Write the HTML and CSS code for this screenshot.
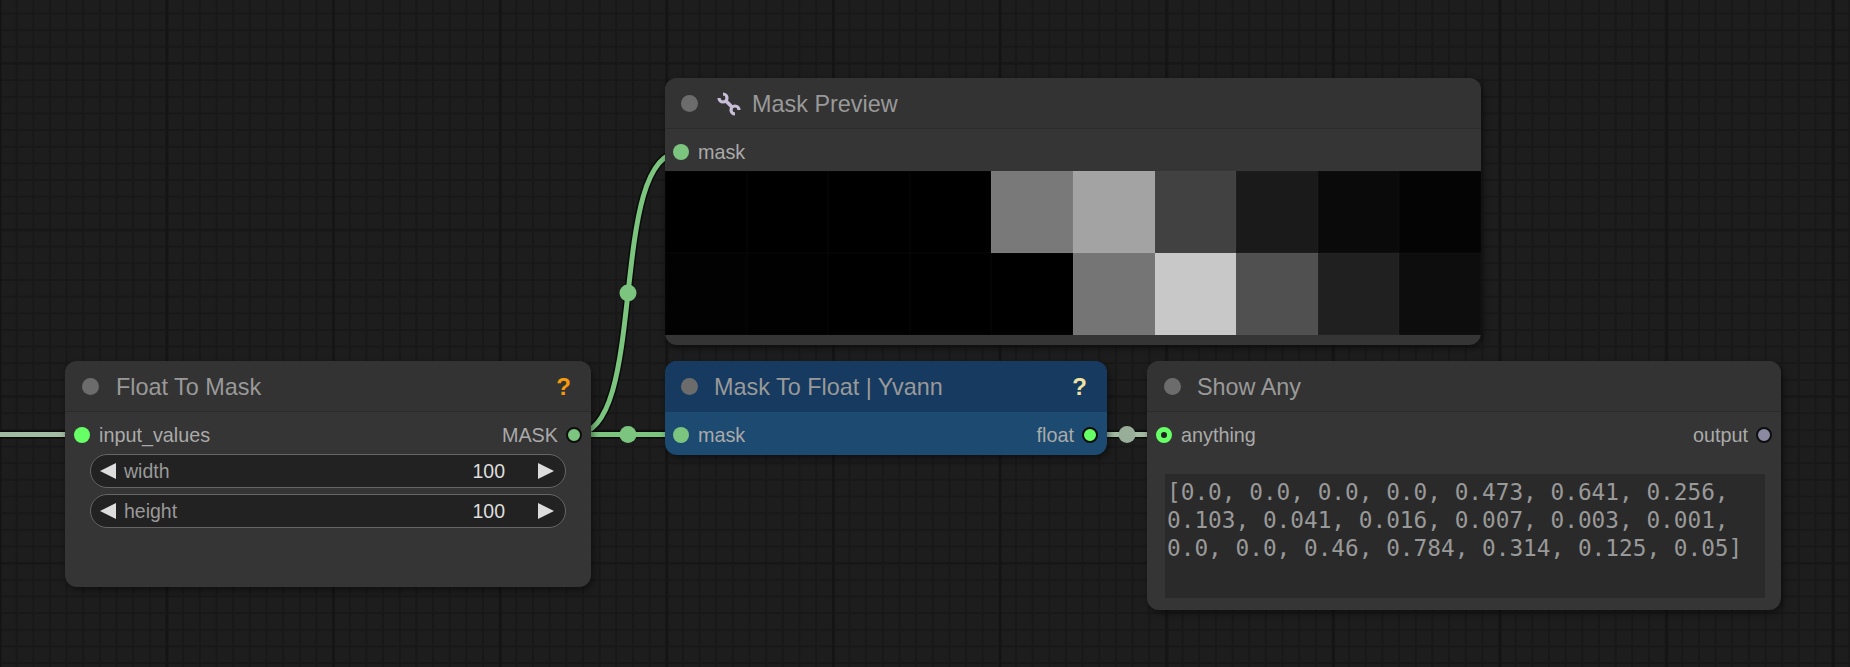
FILE: index.html
```html
<!DOCTYPE html>
<html lang="en">
<head>
    <meta charset="UTF-8">
    <meta name="viewport" content="width=device-width, initial-scale=1.0">
    <title>Node graph</title>
    <link rel="stylesheet" href="styles.css">
</head>
<body>
    <div class="canvas">
        <!-- Links between the nodes, drawn under them -->
        <svg class="links" width="1850" height="667" viewBox="0 0 1850 667">
            <g fill="none" stroke="#0b0b0b" stroke-width="8">
                <path d="M0 434.5H70"/>
                <path d="M575 434.5C650 434.5 606 152 681 152"/>
                <path d="M575 434.5H681"/>
                <path d="M1089 434.5H1165"/>
            </g>
            <g fill="none" stroke-width="5">
                <path stroke="#a3bba3" d="M0 434.5H70"/>
                <path stroke="#7bc57f" d="M575 434.5C650 434.5 606 152 681 152"/>
                <path stroke="#7bc57f" d="M575 434.5H681"/>
                <path stroke="#a3bba3" d="M1089 434.5H1165"/>
            </g>
            <circle cx="628" cy="293" r="8.5" fill="#7bc57f"/>
            <circle cx="628" cy="434.5" r="8.5" fill="#7bc57f"/>
            <circle cx="1127" cy="434.5" r="8.5" fill="#98ae98"/>
        </svg>

        <!-- Mask Preview -->
        <div class="node node-preview">
            <div class="node-title">
                <span class="title-dot"></span>
                <svg class="wrench" width="24" height="24" viewBox="0 0 24 24" fill="none" stroke="#c9bdd9">
                    <path stroke-width="3.2" d="M6 2A4 4 0 1 1 2 6"/>
                    <path stroke-width="3.2" d="M18 22A4 4 0 1 1 22 18"/>
                    <path stroke-width="3.6" d="M8.500 8.500 15.500 15.500"/>
                </svg>
                <span class="title-text">Mask Preview</span>
            </div>
            <div class="slot-row slot-row-short">
                <span class="slot-dot dot-mask"></span>
                <span class="slot-label">mask</span>
            </div>
            <div class="preview-grid">
                <i style="background: rgb(0,0,0)"></i>
                <i style="background: rgb(0,0,0)"></i>
                <i style="background: rgb(0,0,0)"></i>
                <i style="background: rgb(0,0,0)"></i>
                <i style="background: rgb(121,121,121)"></i>
                <i style="background: rgb(163,163,163)"></i>
                <i style="background: rgb(65,65,65)"></i>
                <i style="background: rgb(26,26,26)"></i>
                <i style="background: rgb(10,10,10)"></i>
                <i style="background: rgb(4,4,4)"></i>
                <i style="background: rgb(2,2,2)"></i>
                <i style="background: rgb(1,1,1)"></i>
                <i style="background: rgb(0,0,0)"></i>
                <i style="background: rgb(0,0,0)"></i>
                <i style="background: rgb(0,0,0)"></i>
                <i style="background: rgb(117,117,117)"></i>
                <i style="background: rgb(200,200,200)"></i>
                <i style="background: rgb(80,80,80)"></i>
                <i style="background: rgb(32,32,32)"></i>
                <i style="background: rgb(13,13,13)"></i>
            </div>
        </div>

        <!-- Float To Mask -->
        <div class="node node-float">
            <div class="node-title">
                <span class="title-dot"></span>
                <span class="title-text">Float To Mask</span>
                <span class="help help-orange">?</span>
            </div>
            <div class="slot-row">
                <span class="slot-dot dot-bright"></span>
                <span class="slot-label">input_values</span>
                <span class="slot-label slot-out">MASK</span>
                <span class="slot-dot dot-mask dot-ring"></span>
            </div>
            <div class="widget">
                <span class="arrow arrow-left"></span>
                <span class="widget-name">width</span>
                <span class="widget-value">100</span>
                <span class="arrow arrow-right"></span>
            </div>
            <div class="widget">
                <span class="arrow arrow-left"></span>
                <span class="widget-name">height</span>
                <span class="widget-value">100</span>
                <span class="arrow arrow-right"></span>
            </div>
        </div>

        <!-- Mask To Float -->
        <div class="node node-blue">
            <div class="node-title">
                <span class="title-dot"></span>
                <span class="title-text">Mask To Float | Yvann</span>
                <span class="help help-pale">?</span>
            </div>
            <div class="slot-row">
                <span class="slot-dot dot-mask"></span>
                <span class="slot-label">mask</span>
                <span class="slot-label slot-out">float</span>
                <span class="slot-dot dot-bright dot-ring"></span>
            </div>
        </div>

        <!-- Show Any -->
        <div class="node node-show">
            <div class="node-title">
                <span class="title-dot"></span>
                <span class="title-text">Show Any</span>
            </div>
            <div class="slot-row">
                <span class="slot-dot dot-bright dot-hole"></span>
                <span class="slot-label">anything</span>
                <span class="slot-label slot-out">output</span>
                <span class="slot-dot dot-any dot-ring"></span>
            </div>
            <div class="show-text">[0.0, 0.0, 0.0, 0.0, 0.473, 0.641, 0.256,
0.103, 0.041, 0.016, 0.007, 0.003, 0.001,
0.0, 0.0, 0.46, 0.784, 0.314, 0.125, 0.05]</div>
        </div>
    </div>
</body>
</html>
```

FILE: styles.css
```css
body {
    margin: 0;
    background: #1d1d1d;
    font-family: "Liberation Sans", Arial, sans-serif;
}
.canvas {
    position: relative;
    width: 1850px;
    height: 667px;
    overflow: hidden;
    background-color: #1d1d1d;
    background-image:
        linear-gradient(90deg, #141414 0, #141414 2px, transparent 3px),
        linear-gradient(#171717 0, #171717 2px, transparent 3px),
        linear-gradient(90deg, #181818 0, #181818 2px, transparent 2px),
        linear-gradient(#181818 0, #181818 2px, transparent 2px);
    background-size: 166.67px 166.67px, 166.67px 166.67px, 16.667px 16.667px, 16.667px 16.667px;
    background-position: -1px 0, 0 62px, -1px 0, 0 12.5px;
}
.links {
    position: absolute;
    left: 0;
    top: 0;
}
.node {
    position: absolute;
    box-sizing: border-box;
    background: #353535;
    border-radius: 12px;
    box-shadow: 2px 3px 7px rgba(0, 0, 0, 0.45);
    overflow: hidden;
}
.node-preview {
    left: 665px;
    top: 78px;
    width: 816px;
    height: 267px;
}
.node-float {
    left: 65px;
    top: 361px;
    width: 526px;
    height: 226px;
}
.node-blue {
    left: 665px;
    top: 361px;
    width: 442px;
    height: 94px;
    background: #1c4a70;
}
.node-show {
    left: 1147px;
    top: 361px;
    width: 634px;
    height: 249px;
}
.node-title {
    display: flex;
    align-items: center;
    height: 50px;
    padding: 0 20px 0 17px;
    background: #333333;
    border-bottom: 1px solid #2b2b2b;
    color: #999999;
    font-size: 23.4px;
}
.node-preview .node-title,
.node-blue .node-title {
    padding-left: 16px;
}
.node-blue .node-title {
    background: #163a60;
    border-bottom-color: #163a60;
}
.title-dot {
    width: 17px;
    height: 17px;
    margin-right: 16px;
    border-radius: 50%;
    background: #6c6c6c;
}
.node-float .title-dot {
    margin-right: 17px;
}
.wrench {
    margin: 2px 11px 0 3px;
}
.title-text {
    flex: 1;
    margin-top: 2px;
    white-space: nowrap;
}
.help {
    margin-top: 2px;
    font-weight: bold;
    font-size: 24px;
}
.help-orange {
    color: #f59a0c;
}
.help-pale {
    color: #eee2a6;
}
.slot-row {
    display: flex;
    align-items: center;
    box-sizing: border-box;
    height: 44px;
    padding: 2px 9px 0 8px;
    color: #aaaaaa;
    font-size: 19.8px;
}
.node-float .slot-row,
.node-show .slot-row {
    padding-left: 9px;
}
.slot-row-short {
    height: 42px;
    padding-top: 4px;
}
.slot-dot {
    box-sizing: border-box;
    flex: none;
    width: 16px;
    height: 16px;
    border-radius: 50%;
}
.slot-label {
    margin-left: 9px;
}
.slot-out {
    margin-left: auto;
    margin-right: 8px;
}
.dot-mask {
    background: #7bc57f;
}
.dot-bright {
    background: #66ff66;
}
.dot-any {
    background: #8a8aa3;
}
.dot-ring {
    border: 2px solid #0e0e0e;
}
.dot-hole {
    border: 5px solid #66ff66;
    background: #222222;
}
.widget {
    display: flex;
    align-items: center;
    box-sizing: border-box;
    height: 34px;
    margin: -2px 25px 6px;
    padding: 0 11px 0 9px;
    background: #222222;
    border: 1.500px solid #666666;
    border-radius: 17px;
    font-size: 19.5px;
}
.widget + .widget {
    margin-top: 5px;
}
.widget-name {
    flex: 1;
    margin-left: 8px;
    color: #999999;
}
.widget-value {
    margin-right: 33px;
    color: #dddddd;
}
.arrow {
    width: 0;
    height: 0;
    border-top: 8.500px solid transparent;
    border-bottom: 8.500px solid transparent;
}
.arrow-left {
    border-right: 16px solid #dddddd;
}
.arrow-right {
    border-left: 16px solid #dddddd;
}
.show-text {
    box-sizing: border-box;
    height: 124px;
    margin: 18px 16px 0 18px;
    padding: 4px 2px;
    background: #2a2a2a;
    color: #999999;
    font-family: "DejaVu Sans Mono", monospace;
    font-size: 22.76px;
    line-height: 28px;
    white-space: pre;
}
.preview-grid {
    display: grid;
    grid-template-columns: repeat(10, 1fr);
    grid-template-rows: 82px 82px;
    background: #000000;
}
.preview-grid i {
    box-shadow: inset 0 0 0 0.5px rgba(255, 255, 255, 0.03);
}
```
